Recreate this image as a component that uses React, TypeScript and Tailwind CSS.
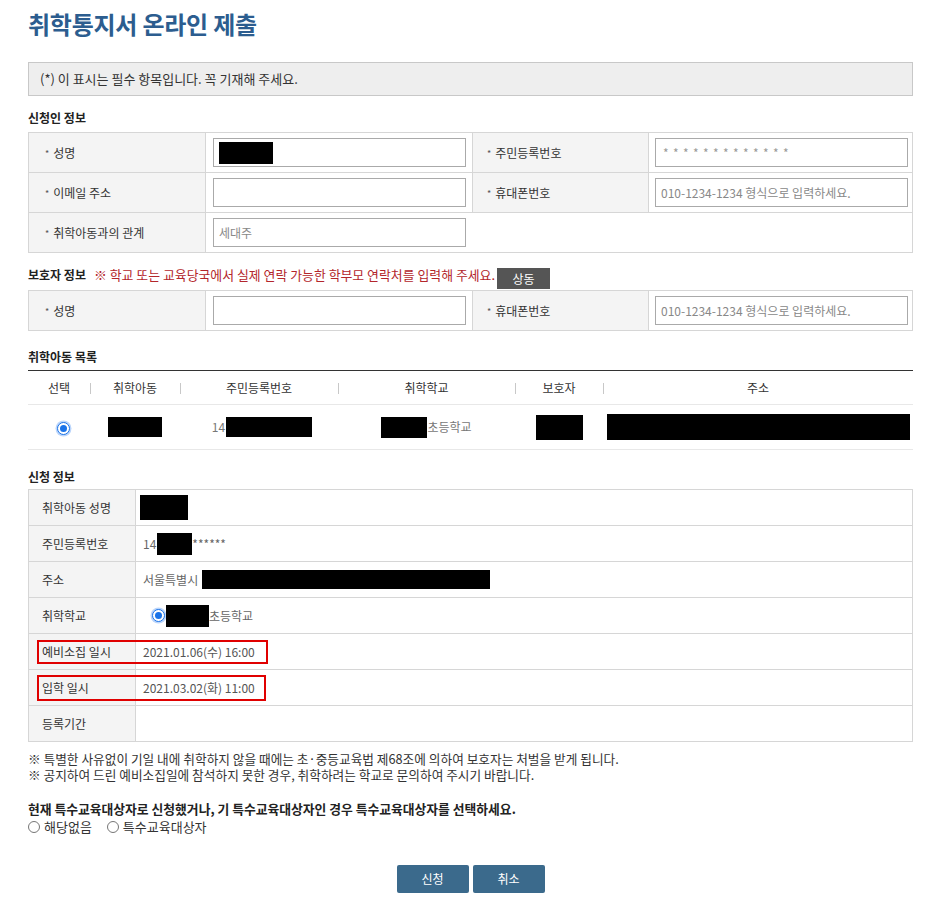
import React from 'react';

function Radio({ checked }: { checked?: boolean }) {
  return checked ? (
    <span className="inline-flex h-[13px] w-[13px] shrink-0 items-center justify-center rounded-full border-[1.5px] border-[#1a73e8] bg-white align-middle shadow-[0_0_0_1.5px_#bcd6fb]">
      <span className="h-[7px] w-[7px] rounded-full bg-[#1a73e8]" />
    </span>
  ) : (
    <span className="inline-block h-[12px] w-[12px] shrink-0 rounded-full border border-[#767676] bg-white align-middle" />
  );
}

function Req({ children }: { children: React.ReactNode }) {
  return (
    <span className="inline-flex items-center">
      <span className="mr-[4px] text-[9px] text-[#555]">*</span>
      {children}
    </span>
  );
}

function Hidden({ className }: { className: string }) {
  return <span className={`inline-block shrink-0 bg-black align-middle ${className}`} />;
}

const th = 'border border-[#d6d6d6] bg-[#f4f4f4] text-left font-normal text-[12px] text-[#333]';
const td = 'border border-[#d6d6d6] bg-white';
const inputBox = 'h-[29px] w-[253px] border border-[#aaa] bg-white px-[5px] text-[12px] text-[#333] placeholder:text-[#888] outline-none';

export default function App() {
  return (
    <div className="min-h-[919px] bg-white pl-[28px] pt-[9px] font-['Noto_Sans_CJK_KR',sans-serif] text-[#333]">
      <div className="w-[885px]">
        <h1 className="text-[24px] leading-[30px] font-bold tracking-[-0.01em] text-[#2c5d8f]">취학통지서 온라인 제출</h1>

        <div className="mt-[23px] flex h-[34px] items-center border border-[#c8c8c8] bg-[#eeeeee] pl-[11px] text-[13px] text-[#333]">
          (*) 이 표시는 필수 항목입니다. 꼭 기재해 주세요.
        </div>

        <h2 className="mt-[12px] mb-[4px] text-[12px] leading-[20px] font-bold text-[#222]">신청인 정보</h2>
        <table className="w-full table-fixed border-collapse border border-[#d6d6d6]">
          <colgroup>
            <col className="w-[177px]" />
            <col className="w-[267px]" />
            <col className="w-[176px]" />
            <col />
          </colgroup>
          <tbody>
            <tr className="h-[40px]">
              <th className={`${th} pl-[16px]`}><Req>성명</Req></th>
              <td className={`${td} px-[7px]`}>
                <div className={`${inputBox} flex items-center px-0`}>
                  <Hidden className="h-[22px] w-[54px]" />
                </div>
              </td>
              <th className={`${th} pl-[14px]`}><Req>주민등록번호</Req></th>
              <td className={`${td} px-[6px]`}>
                <div className={`${inputBox} flex items-center pl-[7px] text-[9px] tracking-[4.4px] text-[#999]`}>
                  *************
                </div>
              </td>
            </tr>
            <tr className="h-[40px]">
              <th className={`${th} pl-[16px]`}><Req>이메일 주소</Req></th>
              <td className={`${td} px-[7px]`}>
                <input readOnly className={inputBox} />
              </td>
              <th className={`${th} pl-[14px]`}><Req>휴대폰번호</Req></th>
              <td className={`${td} px-[6px]`}>
                <input readOnly className={inputBox} placeholder="010-1234-1234 형식으로 입력하세요." />
              </td>
            </tr>
            <tr className="h-[40px]">
              <th className={`${th} pl-[16px]`}><Req>취학아동과의 관계</Req></th>
              <td className={`${td} px-[7px]`} colSpan={3}>
                <input readOnly className={`${inputBox} h-[28px] w-[250px]`} placeholder="세대주" />
              </td>
            </tr>
          </tbody>
        </table>

        <div className="mt-[14px] flex items-start">
          <h2 className="text-[12px] leading-[15px] font-bold text-[#222]">보호자 정보</h2>
          <span className="ml-[8px] text-[12.9px] leading-[15px] text-[#b3262b]">
            ※ 학교 또는 교육당국에서 실제 연락 가능한 학부모 연락처를 입력해 주세요.
          </span>
          <button className="ml-[2px] mt-[1px] h-[21px] w-[53px] bg-[#555] text-[12px] text-white">상동</button>
        </div>
        <table className="mt-[1px] w-full table-fixed border-collapse border border-[#d6d6d6]">
          <colgroup>
            <col className="w-[177px]" />
            <col className="w-[267px]" />
            <col className="w-[176px]" />
            <col />
          </colgroup>
          <tbody>
            <tr className="h-[40px]">
              <th className={`${th} pl-[16px]`}><Req>성명</Req></th>
              <td className={`${td} px-[7px]`}>
                <input readOnly className={inputBox} />
              </td>
              <th className={`${th} pl-[14px]`}><Req>휴대폰번호</Req></th>
              <td className={`${td} px-[6px]`}>
                <input readOnly className={inputBox} placeholder="010-1234-1234 형식으로 입력하세요." />
              </td>
            </tr>
          </tbody>
        </table>

        <h2 className="mt-[16px] mb-[3px] text-[12px] leading-[20px] font-bold text-[#222]">취학아동 목록</h2>
        <table className="w-full table-fixed border-collapse border-t border-t-[#333] text-[12px]">
          <colgroup>
            <col className="w-[62px]" />
            <col className="w-[90px]" />
            <col className="w-[158px]" />
            <col className="w-[177px]" />
            <col className="w-[88px]" />
            <col />
          </colgroup>
          <thead>
            <tr className="h-[34px] border-b border-[#e8e8e8]">
              {['선택', '취학아동', '주민등록번호', '취학학교', '보호자', '주소'].map((h, i) => (
                <th
                  key={h}
                  className={`relative text-center font-normal text-[#333] ${
                    i > 0
                      ? "before:absolute before:left-0 before:top-[12px] before:h-[11px] before:w-px before:bg-[#c8c8c8] before:content-['']"
                      : ''
                  }`}
                >
                  {h}
                </th>
              ))}
            </tr>
          </thead>
          <tbody>
            <tr className="h-[45px] border-b border-[#e8e8e8] text-[#777]">
              <td className="pl-[8px] text-center"><Radio checked /></td>
              <td className="text-center"><Hidden className="h-[20px] w-[54px]" /></td>
              <td>
                <div className="flex items-center justify-center pl-[6px]">
                  <span className="mr-[1px]">14</span>
                  <Hidden className="h-[20px] w-[86px]" />
                </div>
              </td>
              <td>
                <div className="flex items-center justify-center">
                  <Hidden className="h-[21px] w-[46px]" />
                  <span>초등학교</span>
                </div>
              </td>
              <td className="text-center"><Hidden className="h-[25px] w-[47px]" /></td>
              <td className="text-center"><Hidden className="h-[26px] w-[303px]" /></td>
            </tr>
          </tbody>
        </table>

        <h2 className="mt-[17px] mb-[2px] text-[12px] leading-[20px] font-bold text-[#222]">신청 정보</h2>
        <table className="w-full table-fixed border-collapse border border-[#d6d6d6] text-[12px]">
          <colgroup>
            <col className="w-[107px]" />
            <col />
          </colgroup>
          <tbody>
            <tr className="h-[36px]">
              <th className={`${th} pl-[13px]`}>취학아동 성명</th>
              <td className={`${td} pl-[4px]`}><Hidden className="h-[25px] w-[48px]" /></td>
            </tr>
            <tr className="h-[36px]">
              <th className={`${th} pl-[13px]`}>주민등록번호</th>
              <td className={`${td} pl-[7px] text-[#666]`}>
                <div className="flex items-center">
                  <span className="mr-[1px]">14</span>
                  <Hidden className="h-[22px] w-[35px]" />
                  <span>******</span>
                </div>
              </td>
            </tr>
            <tr className="h-[36px]">
              <th className={`${th} pl-[13px]`}>주소</th>
              <td className={`${td} pl-[7px] text-[#666]`}>
                <div className="flex items-center">
                  <span className="mr-[4px]">서울특별시</span>
                  <Hidden className="h-[19px] w-[288px]" />
                </div>
              </td>
            </tr>
            <tr className="h-[36px]">
              <th className={`${th} pl-[13px]`}>취학학교</th>
              <td className={`${td} pl-[16px] text-[#666]`}>
                <div className="flex items-center">
                  <Radio checked />
                  <Hidden className="ml-[1px] h-[22px] w-[43px]" />
                  <span>초등학교</span>
                </div>
              </td>
            </tr>
            <tr className="h-[36px]">
              <th className={`${th} relative pl-[13px]`}>
                예비소집 일시
                <div className="absolute left-[8px] top-[6px] h-[24px] w-[231px] border-2 border-[#e00000]" />
              </th>
              <td className={`${td} pl-[7px] text-[12px] text-[#555]`}>2021.01.06(수) 16:00</td>
            </tr>
            <tr className="h-[36px]">
              <th className={`${th} relative pl-[13px]`}>
                입학 일시
                <div className="absolute left-[8px] top-[5px] h-[26px] w-[229px] border-2 border-[#e00000]" />
              </th>
              <td className={`${td} pl-[7px] text-[12px] text-[#555]`}>2021.03.02(화) 11:00</td>
            </tr>
            <tr className="h-[36px]">
              <th className={`${th} pl-[13px]`}>등록기간</th>
              <td className={td}></td>
            </tr>
          </tbody>
        </table>

        <div className="mt-[9px] text-[12.7px] leading-[16px] text-[#333]">
          <p>※ 특별한 사유없이 기일 내에 취학하지 않을 때에는 초·중등교육법 제68조에 의하여 보호자는 처벌을 받게 됩니다.</p>
          <p>※ 공지하여 드린 예비소집일에 참석하지 못한 경우, 취학하려는 학교로 문의하여 주시기 바랍니다.</p>
        </div>

        <p className="mt-[17px] text-[12.8px] leading-[18px] font-bold text-[#222]">
          현재 특수교육대상자로 신청했거나, 기 특수교육대상자인 경우 특수교육대상자를 선택하세요.
        </p>
        <div className="flex items-center text-[13px] leading-[18px] text-[#333]">
          <label className="flex items-center gap-[4px]"><Radio /><span>해당없음</span></label>
          <label className="ml-[15px] flex items-center gap-[4px]"><Radio /><span>특수교육대상자</span></label>
        </div>

        <div className="mt-[29px] flex justify-center gap-[4px]">
          <button className="h-[28px] w-[72px] rounded-[2px] bg-[#3b6a8c] text-[12px] text-white">신청</button>
          <button className="h-[28px] w-[72px] rounded-[2px] bg-[#3b6a8c] text-[12px] text-white">취소</button>
        </div>
      </div>
    </div>
  );
}
